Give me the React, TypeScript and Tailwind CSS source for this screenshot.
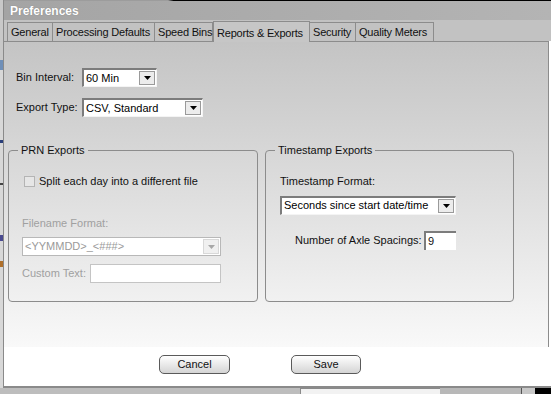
import React from "react";

const TABS = [
  { label: "General", w: "w-[46px]" },
  { label: "Processing Defaults", w: "w-[103px]" },
  { label: "Speed Bins", w: "w-[59px]" },
  { label: "Reports & Exports", w: "w-[97px]", active: true },
  { label: "Security", w: "w-[47px]" },
  { label: "Quality Meters", w: "w-[79px]" },
];

function Arrow({ disabled }: { disabled?: boolean }) {
  return (
    <div
      className={`flex h-full w-[16px] items-center justify-center border ${
        disabled ? "border-[#d8d8d8] bg-[#f0f0f0]" : "border-[#9a9a9a] bg-[#ececec]"
      }`}
    >
      <svg width="7" height="4" viewBox="0 0 7 4">
        <path d="M0 0h7L3.5 4z" fill={disabled ? "#a8a8a8" : "#000"} />
      </svg>
    </div>
  );
}

function Select({ value, w, disabled }: { value: string; w: string; disabled?: boolean }) {
  return (
    <div
      className={`flex h-[19px] ${w} items-stretch border ${
        disabled
          ? "border-[#b8b8b8] bg-white text-[#9a9a9a]"
          : "border-t-2 border-l-2 border-t-[#7c7c7c] border-l-[#7c7c7c] border-r-[#f4f4f4] border-b-[#f4f4f4] bg-white text-black"
      }`}
    >
      <div className="flex flex-1 items-center whitespace-nowrap pl-[2px] leading-none">{value}</div>
      <div className="p-[1px]">
        <Arrow disabled={disabled} />
      </div>
    </div>
  );
}

function Group({ title, children, w }: { title: string; children: React.ReactNode; w: string }) {
  return (
    <fieldset className={`${w} h-[158px] rounded-[4px] border border-[#8c8c8c] px-[13px]`}>
      <legend className="ml-[-4px] px-[3px] text-[11px] leading-[13px] text-[#111]">{title}</legend>
      {children}
    </fieldset>
  );
}

export default function App() {
  return (
    <div
      className="flex h-[394px] w-[551px] flex-col overflow-hidden bg-[#c4c4c4] text-[11px] text-[#111]"
      style={{ fontFamily: '"Liberation Sans", Arial, sans-serif' }}
    >
      <div className="flex h-[388px]">
        {/* background window peeking through */}
        <div className="flex w-[3px] flex-col bg-[#d8d8d8]">
          <div className="h-[60px] bg-[#c8c8c8]" />
          <div className="h-[10px] bg-[#6f8fb8]" />
          <div className="h-[70px]" />
          <div className="h-[3px] bg-[#2a3f7a]" />
          <div className="h-[40px]" />
          <div className="h-[2px] bg-[#444]" />
          <div className="h-[50px]" />
          <div className="h-[6px] bg-[#4a4a90]" />
          <div className="h-[20px]" />
          <div className="h-[6px] bg-[#b0702a]" />
        </div>

        <div className="flex flex-1 flex-col border-b-2 border-l border-[#8a8a8a] bg-white">
          {/* title bar */}
          <div className="h-[1px] shrink-0 bg-[linear-gradient(to_right,#9c9c9c_30%,#000_31%)]" />
          <div className="flex h-[19px] shrink-0 items-center bg-linear-to-r from-[#a4a4a4] to-[#b4b4b4] pl-[6px]">
            <span className="text-[12px] font-bold text-white [text-shadow:0_0_1px_#777]">Preferences</span>
          </div>

          {/* tabs */}
          <div className="flex h-[21px] shrink-0 items-end bg-[#c2c2c2] pl-[3px] tracking-[-0.2px]">
            {TABS.map((t) =>
              t.active ? (
                <div
                  key={t.label}
                  className={`${t.w} relative z-10 mb-[-1px] flex h-[21px] items-center whitespace-nowrap border border-b-0 border-[#8c8c8c] bg-[#c6c6c6] pl-[3px] pt-[2px]`}
                >
                  {t.label}
                </div>
              ) : (
                <div
                  key={t.label}
                  className={`${t.w} -ml-[1px] flex h-[19px] items-center whitespace-nowrap border border-b-0 border-[#8c8c8c] bg-[#c2c2c2] pl-[3px] first:ml-0`}
                >
                  {t.label}
                </div>
              )
            )}
          </div>

          {/* panel */}
          <div className="mr-[2px] h-[306px] shrink-0 border-t border-r border-[#8c8c8c] bg-linear-to-b from-[#c4c4c4] to-[#f9f9f9] pl-[4px]">
            <div className="flex flex-col gap-[11px] pl-[8px] pt-[26px]">
              <div className="flex items-center">
                <span className="w-[66px]">Bin Interval:</span>
                <Select value="60 Min" w="w-[75px]" />
              </div>
              <div className="flex items-center">
                <span className="w-[66px]">Export Type:</span>
                <Select value="CSV, Standard" w="w-[121px]" />
              </div>
            </div>

            <div className="mt-[27px] flex gap-[7px]">
              <Group title="PRN Exports" w="w-[250px]">
                <div className="mt-[16px] flex items-center gap-[4px] pl-[2px]">
                  <div className="h-[11px] w-[11px] border border-[#b4b4b4] bg-[#e6e6e6]" />
                  <span className="text-[#111]">Split each day into a different file</span>
                </div>
                <div className="mt-[25px] text-[#a0a0a0]">Filename Format:</div>
                <div className="mt-[6px]">
                  <Select value="<YYMMDD>_<###>" w="w-[199px]" disabled />
                </div>
                <div className="mt-[8px] flex items-center">
                  <span className="w-[68px] text-[#a0a0a0]">Custom Text:</span>
                  <div className="h-[19px] w-[131px] border border-[#c4c4c4] bg-white" />
                </div>
              </Group>

              <Group title="Timestamp Exports" w="w-[249px]">
                <div className="mt-[16px] pl-[1px]">Timestamp Format:</div>
                <div className="mt-[6px] pl-[1px]">
                  <Select value="Seconds since start date/time" w="w-[176px]" />
                </div>
                <div className="mt-[16px] flex items-center pl-[16px]">
                  <span className="w-[129px]">Number of Axle Spacings:</span>
                  <div className="flex h-[19px] w-[32px] items-center border-t-2 border-l-2 border-t-[#7c7c7c] border-l-[#7c7c7c] bg-white pl-[2px]">
                    9
                  </div>
                </div>
              </Group>
            </div>
          </div>

          {/* footer */}
          <div className="flex flex-1 items-start bg-white pl-[155px] pt-[8px]">
            <button className="h-[19px] w-[71px] rounded-[5px] border border-[#5a5a5a] bg-linear-to-b from-[#ffffff] to-[#d4d4d4] text-[11px] text-[#111]">
              Cancel
            </button>
            <button className="ml-[61px] h-[19px] w-[70px] rounded-[5px] border border-[#5a5a5a] bg-linear-to-b from-[#ffffff] to-[#d4d4d4] text-[11px] text-[#111]">
              Save
            </button>
          </div>
        </div>
      </div>

      {/* background beneath the window */}
      <div className="flex h-[6px]">
        <div className="w-[300px] bg-[#bdbdbd]" />
        <div className="w-[140px] border-t border-l border-[#8a8a8a] bg-[#f2f2f2]" />
        <div className="w-[81px] bg-[#b8b8b8]" />
        <div className="w-[14px] border-l border-[#555] bg-[#c8c8c8]" />
        <div className="flex-1 bg-black" />
      </div>
    </div>
  );
}
